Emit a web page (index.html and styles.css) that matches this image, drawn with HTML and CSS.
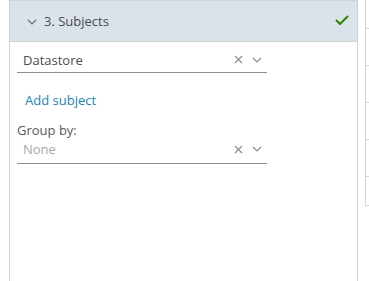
FILE: index.html
```html
<!DOCTYPE html>
<html lang="en">
<head>
  <meta charset="UTF-8">
  <meta name="viewport" content="width=device-width, initial-scale=1.0">
  <title>Subjects</title>
  <link rel="stylesheet" href="styles.css">
</head>
<body>
<div class="page">
  <div class="panel">
    <div class="step-header">
      <svg class="caret" width="10" height="6" viewBox="0 0 10 6"><path d="M1 1 L5 5 L9 1" fill="none" stroke="#666" stroke-width="1.1"/></svg>
      <span class="step-title">3. Subjects</span>
      <svg class="done" width="14" height="10" viewBox="0 0 14 10"><path d="M1 5 L5 9 L13 1" fill="none" stroke="#2f8400" stroke-width="2"/></svg>
    </div>

    <div class="step-body">
      <div class="select">
        <span class="select-value">Datastore</span>
        <svg class="clear" width="9" height="9" viewBox="0 0 9 9"><path d="M1 1 L8 8 M8 1 L1 8" stroke="#8c8c8c" stroke-width="1.2"/></svg>
        <svg class="arrow" width="10" height="6" viewBox="0 0 10 6"><path d="M1 1 L5 5 L9 1" fill="none" stroke="#8c8c8c" stroke-width="1.2"/></svg>
      </div>

      <a href="#" class="add-link">Add subject</a>

      <label class="field-label">Group by:</label>
      <div class="select group-select">
        <span class="select-value placeholder">None</span>
        <svg class="clear" width="9" height="9" viewBox="0 0 9 9"><path d="M1 1 L8 8 M8 1 L1 8" stroke="#8c8c8c" stroke-width="1.2"/></svg>
        <svg class="arrow" width="10" height="6" viewBox="0 0 10 6"><path d="M1 1 L5 5 L9 1" fill="none" stroke="#8c8c8c" stroke-width="1.2"/></svg>
      </div>
    </div>
  </div>

  <!-- edge of the next table -->
  <div class="rail">
    <div class="rail-row first"></div>
    <div class="rail-row"></div>
    <div class="rail-row"></div>
    <div class="rail-row"></div>
    <div class="rail-row"></div>
    <div class="rail-row last"></div>
  </div>
</div>
</body>
</html>
```

FILE: styles.css
```css
body {
  margin: 0;
  background-color: #fff;
  font-family: "Open Sans", "Noto Sans", sans-serif;
  font-size: 13px;
  line-height: 16px;
  color: #333;
}

.page {
  display: flex;
  align-items: flex-start;
  height: 281px;
  overflow: hidden;
}

.panel {
  margin-left: 9px;
  width: 348px;
  height: 300px;
  border: 1px solid #d2d2d2;
  border-bottom: none;
}

.step-header {
  display: flex;
  align-items: center;
  height: 40px;
  background-color: #d9e3e9;
  border-bottom: 1px solid #cfd6da;
  padding: 0 8px 0 17px;
}

.caret {
  margin-top: 1px;
}

.step-title {
  margin-left: 7px;
  color: #4a4a4a;
}

.done {
  margin-left: auto;
  margin-top: -3px;
}

.step-body {
  padding: 8px 0 0 7px;
}

.select {
  box-sizing: border-box;
  display: flex;
  align-items: center;
  width: 250px;
  height: 23px;
  padding-bottom: 3px;
  border-bottom: 1px solid #8c8c8c;
}

.group-select {
  height: 26px;
}

.select-value {
  flex: 1;
  padding-left: 6px;
  color: #4d4d4d;
}

.placeholder {
  color: #a8a8a8;
}

.clear {
  margin-right: 9px;
}

.arrow {
  margin-right: 5px;
}

.add-link {
  display: block;
  margin: 19px 0 0 8px;
  color: #1a86c2;
  text-decoration: none;
}

.field-label {
  display: block;
  margin-top: 14px;
  color: #595959;
}

.rail {
  margin-left: 7px;
  width: 3px;
  border-left: 1px solid #d6d6d6;
}

.rail-row {
  height: 36px;
  border-bottom: 1px solid #d6d6d6;
}

.rail-row.first {
  height: 28px;
}

.rail-row.last {
  height: 28px;
}
```
